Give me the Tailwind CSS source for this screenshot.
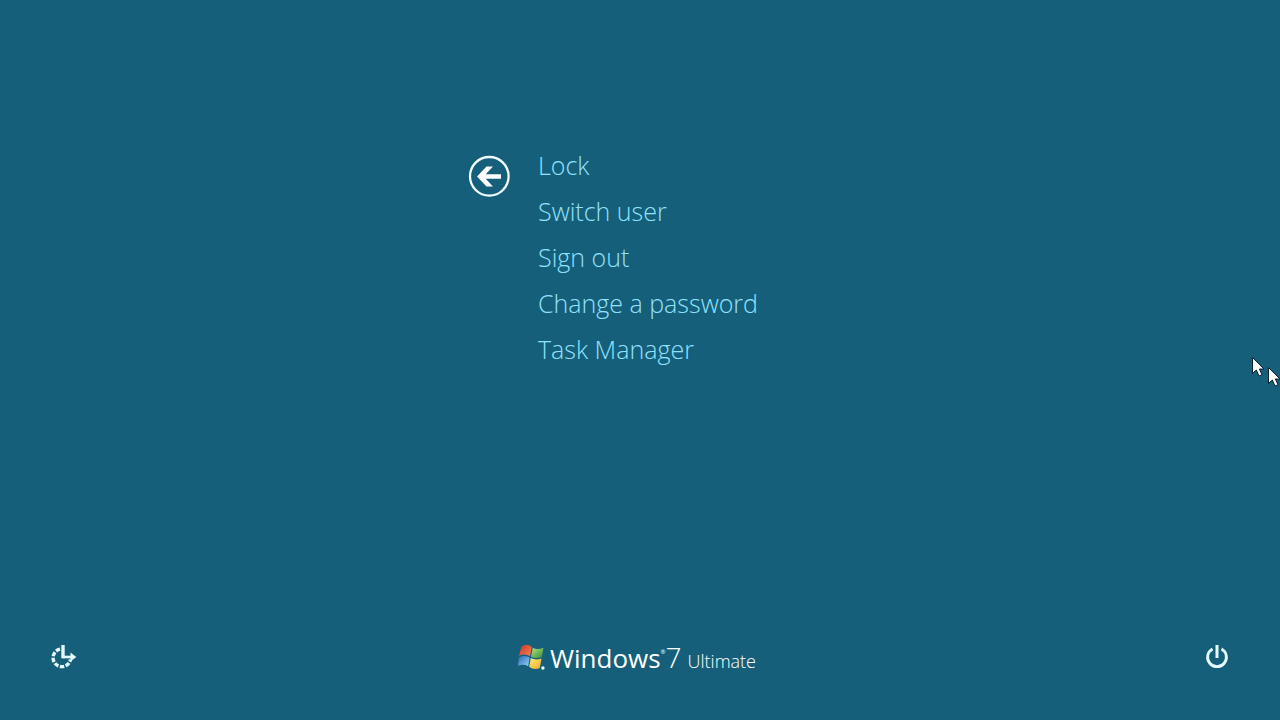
<!DOCTYPE html>
<html lang="en">
<head>
<meta charset="utf-8">
<meta name="viewport" content="width=device-width, initial-scale=1">
<title>Security options</title>
<script src="https://cdn.jsdelivr.net/npm/@tailwindcss/browser@4"></script>
</head>
<body class="relative flex min-h-screen flex-col overflow-x-hidden bg-[#155f7b] font-['Open_Sans','Noto_Sans',sans-serif] text-white">
<main class="mx-auto flex w-full max-w-[344px] grow items-start gap-7 pt-[142px]">
  <button type="button" aria-label="Back" class="mt-[13px] shrink-0">
    <svg class="size-[42px]" viewBox="0 0 42 42" fill="none" aria-hidden="true">
      <circle cx="21.3" cy="21.3" r="19.3" stroke="#f2fdff" stroke-width="2.3"/>
      <path d="M9 21.5 18.5 11.5H25L17.7 19.3H33V23.7H17.7L25 31.5H18.5Z" fill="#fff"/>
    </svg>
  </button>
  <nav aria-label="Security options" class="flex flex-col items-start text-[25px] leading-[46px] font-light whitespace-nowrap text-[#92e2fb]">
    <button type="button">Lock</button>
    <button type="button">Switch user</button>
    <button type="button">Sign out</button>
    <button type="button">Change a password</button>
    <button type="button">Task Manager</button>
  </nav>
</main>
<footer class="grid grid-cols-[1fr_auto_1fr] items-center px-[50px] pb-10">
  <button type="button" aria-label="Ease of access" class="mb-1 justify-self-start">
    <svg class="size-7" viewBox="0 0 28 28" fill="none" stroke="#e4faff" aria-hidden="true">
      <path d="M10 6.2A8.8 8.8 0 1 0 20.5 16.5" stroke-width="3.4" stroke-dasharray="4.4 1.5"/>
      <path d="M13 2V15.2" stroke-width="3.4"/>
      <path d="M12 14H23" stroke-width="2.6"/>
      <path d="M20.5 9.5 26.3 14 20.5 18.5Z" fill="#e4faff" stroke="none"/>
    </svg>
  </button>
  <div class="flex items-center gap-1 pr-1.5">
    <svg class="mb-1 h-[30px] w-7" viewBox="0 0 28 30" aria-hidden="true">
      <defs>
        <linearGradient id="red" x2="1" y2="1"><stop stop-color="#c93520"/><stop offset="1" stop-color="#fa8257"/></linearGradient>
        <linearGradient id="green" x2="1" y2="1"><stop stop-color="#b6df79"/><stop offset="1" stop-color="#359040"/></linearGradient>
        <linearGradient id="blue" x2="1" y2="1"><stop stop-color="#2467b5"/><stop offset="1" stop-color="#9ad4f5"/></linearGradient>
        <linearGradient id="yellow" x2="1" y2="1"><stop stop-color="#fff07c"/><stop offset="1" stop-color="#efa820"/></linearGradient>
      </defs>
      <path d="M3.5 4.5Q9 1 13.8 5L12 14Q7 11 1 13.8Z" fill="url(#red)"/>
      <path d="M14.8 5.7Q19 8.2 25.5 5.8L23.8 15Q18 17.3 13 14.7Z" fill="url(#green)"/>
      <path d="M1 15.2Q7 12.5 11.7 15.4L10.2 24.2Q5.5 21.5 0 23.8Z" fill="url(#blue)"/>
      <path d="M12.8 16Q17.5 18.6 23.5 16.4L21.8 26Q16.5 28.3 11.2 25Z" fill="url(#yellow)"/>
      <circle cx="24.9" cy="26" r="1.7" fill="#e8faff"/>
    </svg>
    <div class="flex items-baseline whitespace-nowrap">
      <span class="text-[26px] leading-[38px]">Windows</span>
      <span class="self-start pt-[10px] text-[6px] leading-2">®</span>
      <span class="text-[28px] leading-[38px] font-light">7</span>
      <span class="ml-1.5 text-[18px] leading-[38px] font-light">Ultimate</span>
    </div>
  </div>
  <button type="button" aria-label="Power" class="mb-1 justify-self-end">
    <svg class="size-[26px]" viewBox="0 0 26 26" fill="none" stroke="#e4faff" aria-hidden="true">
      <path d="M8.5 5A9.4 9.4 0 1 0 17.5 5" stroke-width="2.8"/>
      <path d="M13 1V14" stroke-width="3"/>
    </svg>
  </button>
</footer>
<svg class="pointer-events-none absolute top-[357px] right-0 h-[30px] w-7" viewBox="0 0 28 30" aria-hidden="true">
  <path id="pointer" d="M.5.5V16.5L4.3 13 7 19 10 17.7 7.4 12H12Z" fill="#fff" stroke="#06222e"/>
  <use href="#pointer" x="16" y="10"/>
</svg>
</body>
</html>
